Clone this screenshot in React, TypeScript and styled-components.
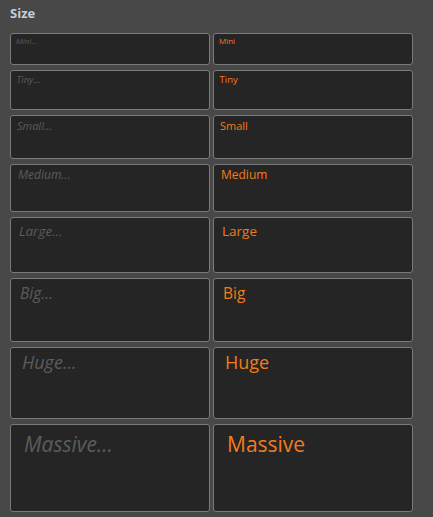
import { FC, Fragment } from 'react';
import styled, { createGlobalStyle } from 'styled-components';

const GlobalStyle = createGlobalStyle`
  html, body {
    margin: 0;
    padding: 0;
    background: #484848;
  }
  body {
    font-family: "Open Sans", "Noto Sans", sans-serif;
  }
`;

type Size = {
  name: string;
  height: number;
  fontSize: number;
  padTop: number;
  padLeft: number;
};

const sizes: Size[] = [
  { name: 'Mini', height: 32, fontSize: 8, padTop: 2, padLeft: 5 },
  { name: 'Tiny', height: 40, fontSize: 9.5, padTop: 3.5, padLeft: 5.5 },
  { name: 'Small', height: 44, fontSize: 11, padTop: 3, padLeft: 6 },
  { name: 'Medium', height: 48, fontSize: 12, padTop: 3.5, padLeft: 7 },
  { name: 'Large', height: 56, fontSize: 13.5, padTop: 5, padLeft: 8 },
  { name: 'Big', height: 64, fontSize: 15.5, padTop: 5, padLeft: 9 },
  { name: 'Huge', height: 72, fontSize: 18, padTop: 4.5, padLeft: 11 },
  { name: 'Massive', height: 88, fontSize: 21, padTop: 7, padLeft: 13 },
];

const Panel = styled.div`
  padding: 6px 0 0 10px;
`;

const Title = styled.div`
  font-size: 13px;
  font-weight: 700;
  line-height: 1.2;
  color: #c5ced8;
  margin-bottom: 11px;
`;

const Grid = styled.div`
  display: grid;
  grid-template-columns: 200px 200px;
  column-gap: 3px;
  row-gap: 5px;
`;

const Field = styled.textarea<{ $h: number; $fs: number; $pt: number; $pl: number }>`
  box-sizing: border-box;
  display: block;
  width: 200px;
  height: ${(p) => p.$h}px;
  margin: 0;
  padding: ${(p) => p.$pt}px ${(p) => p.$pl}px 0;
  font-family: "Open Sans", "Noto Sans", sans-serif;
  font-size: ${(p) => p.$fs}px;
  line-height: 1.2;
  color: #f27c1c;
  background: #252525;
  border: 1px solid #7a7a7a;
  border-radius: 3px;
  resize: none;
  outline: none;
  overflow: hidden;

  &::placeholder {
    color: #5c5c5c;
    font-style: italic;
    opacity: 1;
  }
`;

const App: FC = () => (
  <>
    <GlobalStyle />
    <Panel>
      <Title>Size</Title>
      <Grid>
        {sizes.map((s) => (
          <Fragment key={s.name}>
            <Field
              $h={s.height}
              $fs={s.fontSize}
              $pt={s.padTop}
              $pl={s.padLeft}
              placeholder={s.name + '...'}
            />
            <Field
              $h={s.height}
              $fs={s.fontSize}
              $pt={s.padTop}
              $pl={s.padLeft}
              defaultValue={s.name}
            />
          </Fragment>
        ))}
      </Grid>
    </Panel>
  </>
);

export default App;
